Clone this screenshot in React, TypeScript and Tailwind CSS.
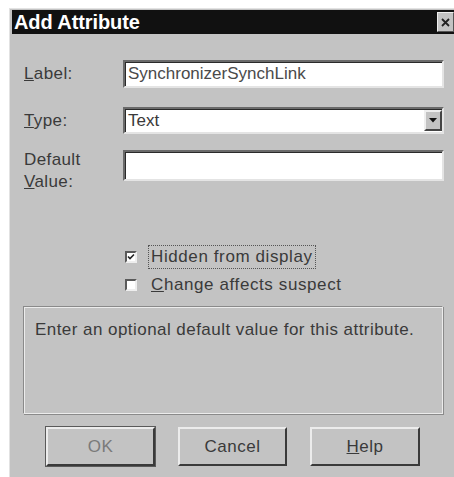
import type { ReactNode } from 'react';

const font = { fontFamily: '"Liberation Sans", Arial, sans-serif' };

// Sunken 3D field border, classic dialog style
const sunken =
  'bg-white border-2 border-t-[#6a6a6a] border-l-[#6a6a6a] border-b-[#e4e4e4] border-r-[#e4e4e4] shadow-[inset_1px_1px_0_#2a2a2a]';

const Field = ({ label, children, className }: { label: ReactNode; children: ReactNode; className?: string }) => (
  <div className={`flex ${className ?? ''}`}>
    <div className="w-[99px] shrink-0 text-[17px] tracking-[0.4px] text-[#3a3a3a] flex items-center">{label}</div>
    <div className="flex-1">{children}</div>
  </div>
);

const Check = ({ checked, children, focused }: { checked?: boolean; children: ReactNode; focused?: boolean }) => (
  <div className="flex items-center gap-[12px] h-[24px]">
    <span className="w-[12px] h-[12px] bg-white border-2 border-t-[#5a5a5a] border-l-[#5a5a5a] border-b-[#eee] border-r-[#eee] flex items-center justify-center">
      {checked && (
        <svg width="8" height="8" viewBox="0 0 8 8">
          <path d="M1 3.5 L3 5.5 L7 1.5" stroke="#222" strokeWidth="1.6" fill="none" />
        </svg>
      )}
    </span>
    <span
      className={`text-[17px] leading-[22px] tracking-[0.6px] text-[#3a3a3a] px-[2px] ${
        focused ? 'outline outline-1 outline-dotted outline-[#555]' : ''
      }`}>
      {children}
    </span>
  </div>
);

const Button = ({ children, isDefault, dim }: { children: ReactNode; isDefault?: boolean; dim?: boolean }) => (
  <div
    className={`h-[39px] flex items-center justify-center text-[17px] tracking-[0.5px] ${
      dim ? 'text-[#7a7a7a]' : 'text-[#3a3a3a]'
    } border-2 border-t-[#ececec] border-l-[#ececec] border-b-[#3a3a3a] border-r-[#3a3a3a] ${
      isDefault ? 'outline outline-1 outline-[#5a5a5a]' : ''
    }`}>
    {children}
  </div>
);

export default function App() {
  return (
    <div className="w-[454px] h-[477px] bg-white pt-[8px] pl-[9px] overflow-hidden" style={font}>
      <div className="h-full bg-[#c3c3c3] border-l border-t border-[#e2e2e2] flex flex-col">
        <div className="mt-[1px] ml-[2px] h-[24px] bg-[#111] flex items-center justify-between">
          <span className="pl-[2px] text-white font-bold text-[20px] leading-[24px] tracking-[-0.1px]">Add Attribute</span>
          <span className="w-[17px] h-[20px] bg-[#c3c3c3] border border-t-[#eee] border-l-[#eee] border-b-[#555] border-r-[#555] flex items-center justify-center">
            <svg width="9" height="9" viewBox="0 0 9 9">
              <path d="M1 1 L8 8 M8 1 L1 8" stroke="#222" strokeWidth="1.8" />
            </svg>
          </span>
        </div>

        <div className="pl-[14px] pr-[10px] pt-[26px] flex flex-col">
          <Field label={<span><u>L</u>abel:</span>}>
            <div className={`${sunken} h-[28px] flex items-center pl-[3px] text-[17px] text-[#4a4a4a]`}>
              SynchronizerSynchLink
            </div>
          </Field>

          <Field className="mt-[19px]" label={<span><u>T</u>ype:</span>}>
            <div className={`${sunken} h-[27px] flex items-center justify-between pl-[3px] text-[17px] text-[#3a3a3a]`}>
              <span>Text</span>
              <span className="w-[18px] h-[21px] bg-[#c3c3c3] border-2 border-t-[#eee] border-l-[#eee] border-b-[#444] border-r-[#444] flex items-center justify-center">
                <svg width="8" height="5" viewBox="0 0 8 5">
                  <path d="M0 0 H8 L4 4.5 Z" fill="#111" />
                </svg>
              </span>
            </div>
          </Field>

          <div className="mt-[16px] flex">
            <div className="w-[99px] shrink-0 text-[17px] tracking-[0.4px] leading-[22px] text-[#3a3a3a] -mt-[1px]">
              Default
              <br />
              <u>V</u>alue:
            </div>
            <div className={`${sunken} flex-1 h-[31px]`} />
          </div>

          <div className="pl-[101px] mt-[52px] flex flex-col gap-[4px]">
            <Check checked focused>
              Hidden from display
            </Check>
            <Check>
              <u>C</u>hange affects suspect
            </Check>
          </div>

          <div className="mt-[9px] ml-[-1px] mr-[1px] h-[108px] border border-t-[#8a8a8a] border-l-[#8a8a8a] border-b-[#ececec] border-r-[#ececec] shadow-[inset_1px_1px_0_#ececec,1px_1px_0_#8a8a8a]">
            <p className="pl-[11px] pt-[10px] text-[17px] text-[#3a3a3a] tracking-[0.45px]">
              Enter an optional default value for this attribute.
            </p>
          </div>

          <div className="mt-[13px] pl-[22px] flex gap-[23px]">
            <div className="w-[109px]">
              <Button isDefault dim>
                OK
              </Button>
            </div>
            <div className="w-[109px]">
              <Button>Cancel</Button>
            </div>
            <div className="w-[110px]">
              <Button>
                <span><u>H</u>elp</span>
              </Button>
            </div>
          </div>
        </div>
      </div>
    </div>
  );
}
